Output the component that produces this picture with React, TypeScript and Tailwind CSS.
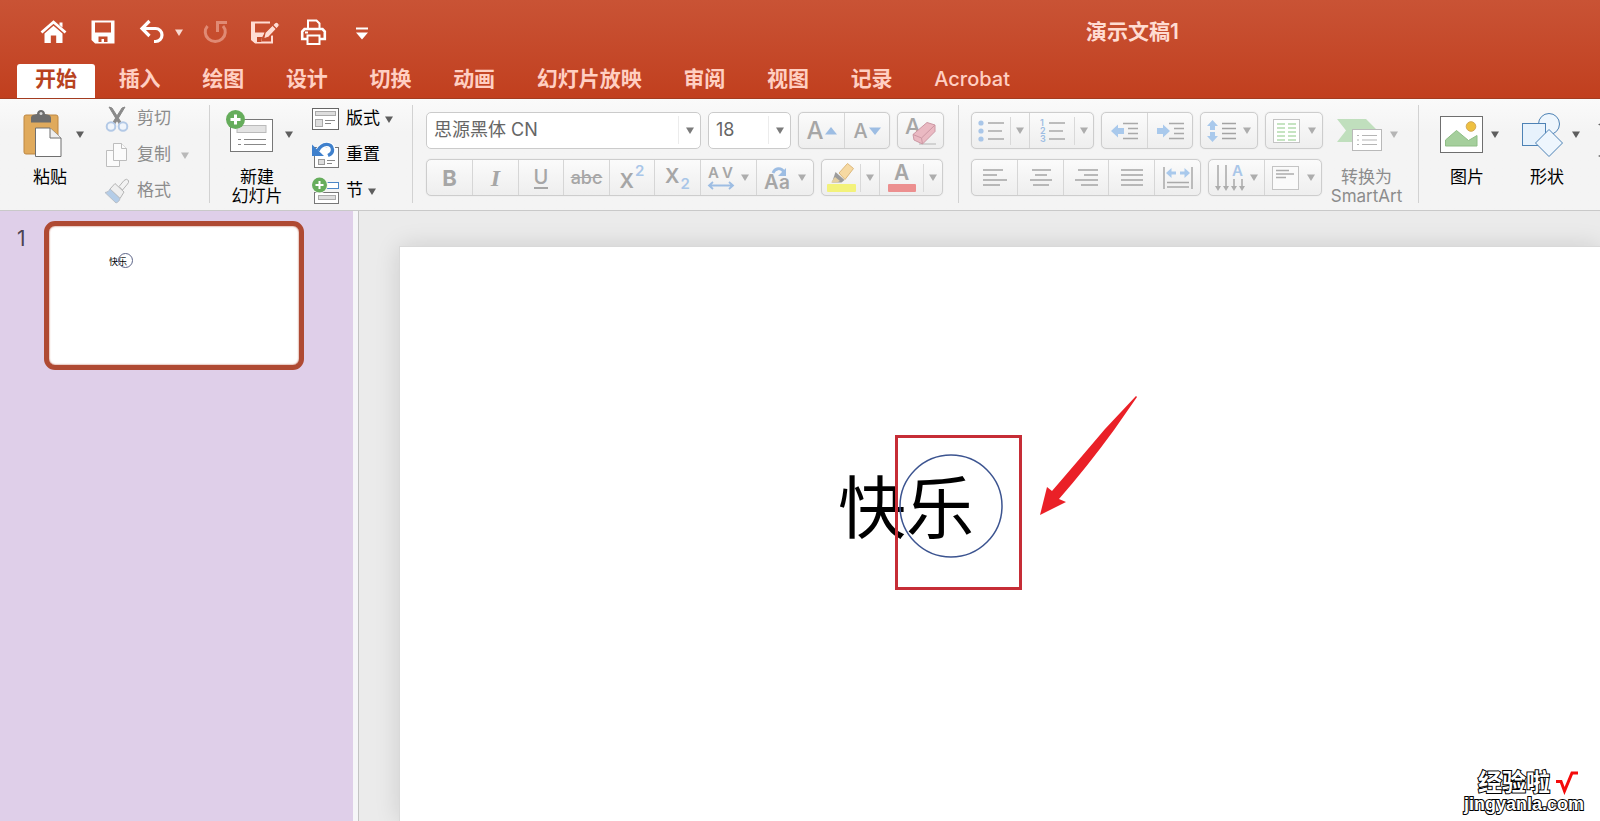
import type { ReactNode } from "react";

const tabs = ["插入", "绘图", "设计", "切换", "动画", "幻灯片放映", "审阅", "视图", "记录"];

function Caret({ className = "text-[#5e5e5e]" }: { className?: string }) {
  return (
    <svg width="8" height="7" viewBox="0 0 8 7" className={`shrink-0 ${className}`} aria-hidden="true">
      <path d="M0 0.5h8L4 7z" fill="currentColor" />
    </svg>
  );
}

function Divider() {
  return <div className="h-[98px] w-px shrink-0 bg-[#d2d2d2]" />;
}

function Box({ children }: { children: ReactNode }) {
  return (
    <div className="flex h-[37px] shrink-0 divide-x divide-[#d6d6d6] rounded-[5px] border border-[#cdcdcd] bg-linear-to-b from-[#fbfbfb] to-[#eeeeee] shadow-[0_0_1px_#cccccc]">
      {children}
    </div>
  );
}

function Cell({ label, width = "w-[46px]", children }: { label: string; width?: string; children: ReactNode }) {
  return (
    <button type="button" aria-label={label} className={`flex h-full shrink-0 items-center justify-center leading-7 text-[#a6a6a6] ${width}`}>
      {children}
    </button>
  );
}

function SplitCell({ label, width, children }: { label: string; width: string; children: ReactNode }) {
  return (
    <div className={`flex h-full shrink-0 items-center ${width}`}>
      <button type="button" aria-label={label} className="flex h-full flex-1 items-center justify-center">
        {children}
      </button>
      <div className="h-7 w-px bg-[#d9d9d9]" />
      <button type="button" aria-label={`${label}选项`} className="flex h-full w-[18px] items-center justify-center">
        <Caret className="text-[#adadad]" />
      </button>
    </div>
  );
}

function Lines({ rows, width = 26, height = 20 }: { rows: [number, number, number][]; width?: number; height?: number }) {
  return (
    <svg width={width} height={height} viewBox={`0 0 ${width} ${height}`} aria-hidden="true">
      {rows.map(([x1, x2, y]) => (
        <path key={y} d={`M${x1} ${y}H${x2}`} stroke="#a9a9a9" strokeWidth="1.6" />
      ))}
    </svg>
  );
}

function QuickBar() {
  return (
    <div className="flex items-center pl-10 text-white">
      <button type="button" aria-label="主页" className="mr-6 block">
        <svg width="27" height="26" viewBox="0 0 27 26" fill="none">
          <path d="M1.500 13.500 13.500 3l12 10.500" stroke="currentColor" strokeWidth="2.800" />
          <path d="M19.500 3.500h3v5l-3-2.500z" fill="currentColor" />
          <path d="M4.500 14.500 13.500 6.800l9 7.700V24h-6.300v-7.500h-5.400V24H4.500z" fill="currentColor" />
        </svg>
      </button>
      <button type="button" aria-label="保存" className="mr-6 block">
        <svg width="24" height="26" viewBox="0 0 24 26" fill="none">
          <path d="M1.500 2.500h21v21h-18l-3-3z" stroke="currentColor" strokeWidth="2" />
          <path d="M1 13.500V3h3v10.500h16V3h3v21H5l-4-4z" fill="currentColor" />
          <path d="M7.500 23v-5.500h9V23h-3.500v-3h-2.500v3z" fill="#c34b2b" />
        </svg>
      </button>
      <button type="button" aria-label="撤消" className="mr-[10px] block">
        <svg width="26" height="26" viewBox="0 0 26 26" fill="none" stroke="currentColor" strokeWidth="3.200">
          <path d="M10.500 2 3 9.500l7.500 7.500M3 9.500h13.500a6.500 6.500 0 0 1 0 13H15" />
        </svg>
      </button>
      <button type="button" aria-label="撤消列表" className="mr-5 block">
        <Caret className="text-[#f8d9d0]" />
      </button>
      <button type="button" aria-label="恢复" className="mr-[22px] block text-[#e08a74]">
        <svg width="25" height="26" viewBox="0 0 25 26" fill="none" stroke="currentColor" strokeWidth="3">
          <path d="M4.500 7a10 9.500 0 1 0 15.500 0M14.500 13V3.500H24" />
        </svg>
      </button>
      <button type="button" aria-label="另存为" className="mr-5 block text-[#ffdcd3]">
        <svg width="30" height="26" viewBox="0 0 30 26" fill="none">
          <path d="M20 3.500H2v17l3.500 3H22v-7" stroke="currentColor" strokeWidth="2" />
          <path d="M1 13.500h14l-3 5v5.500H5l-4-4zM2 3h3v11H2z" fill="currentColor" />
          <path d="M7 23v-5h5l-.5 5z" fill="#c34b2b" />
          <path d="m13.500 20 1.500-6.500L24.500 4a2.500 2.500 0 0 1 3.800 0 2.700 2.700 0 0 1 .2 4L19 18z" fill="currentColor" stroke="#c54d2d" strokeWidth="1.300" />
          <path d="m22.500 6 4 4" stroke="#c54d2d" strokeWidth="1.300" />
        </svg>
      </button>
      <button type="button" aria-label="打印" className="mr-[29px] block">
        <svg width="27" height="26" viewBox="0 0 27 26" fill="none" stroke="currentColor" strokeWidth="2">
          <path d="M8 10V1.500h8.500l3 3V10" />
          <path d="M7 20H2.200v-7.500L4.500 10h18l2.300 2.500V20H20" strokeWidth="2.600" />
          <path d="M7.500 16.500h12V25h-12z" />
          <path d="M5 13.500h3" />
        </svg>
      </button>
      <button type="button" aria-label="自定义快速访问工具栏" className="block">
        <svg width="12" height="26" viewBox="0 0 12 26" fill="currentColor">
          <path d="M0 8.500h12v2H0zM0 13.500h12l-6 7z" />
        </svg>
      </button>
    </div>
  );
}

function Header() {
  return (
    <header className="flex flex-col border-b border-[#a33c20] bg-linear-to-b from-[#c95335] to-[#c13f1e]">
      <div className="flex h-16 items-center">
        <QuickBar />
        <h1 className="ml-[718px] shrink-0 text-[21px] leading-6 font-semibold text-[#ffdcd2]">演示文稿1</h1>
      </div>
      <nav className="ml-[17px] flex w-[1011px] justify-between text-[21px] leading-[30px]">
        <a href="#" className="h-[34px] shrink-0 rounded-t-[3px] bg-white px-[18px] font-semibold text-[#b8431f]">
          开始
        </a>
        {tabs.map((tab) => (
          <a key={tab} href="#" className="h-[34px] shrink-0 px-[18px] font-semibold text-[#ffcfc2]">
            {tab}
          </a>
        ))}
        <a href="#" className="h-[34px] shrink-0 px-[18px] text-[20px] font-medium text-[#ffcfc2]">
          Acrobat
        </a>
      </nav>
    </header>
  );
}

function PasteGroup() {
  return (
    <div className="flex w-[209px] shrink-0">
      <div className="flex w-[97px] flex-col pt-1">
        <div className="flex items-center pl-[23px]">
          <button type="button" aria-label="粘贴图标">
            <svg width="40" height="50" viewBox="0 0 40 50">
              <rect x="1" y="6" width="34" height="39" rx="2" fill="#e0aa5c" stroke="#bd8742" />
              <path d="M8 13.500V9c0-3 3-3.500 6-4 0-5.500 8-5.500 8 0 3 .500 6 1 6 4v4.500z" fill="#6d6d6d" />
              <circle cx="18" cy="4.500" r="1.500" fill="#d8d8d8" />
              <path d="M12.500 19h14.500l11 10v18.500H12.500z" fill="#fff" stroke="#6f6f6f" />
              <path d="M27 19v10h11" fill="#eee" stroke="#6f6f6f" />
            </svg>
          </button>
          <button type="button" aria-label="粘贴选项" className="ml-[13px]">
            <Caret />
          </button>
        </div>
        <span className="mt-[9px] pl-[33px] text-[17px] leading-[19px] text-black">粘贴</span>
      </div>
      <div className="-mt-1 flex flex-col pl-2 text-[17px] text-[#8c8c8c]">
        <button type="button" className="flex h-9 items-center gap-2">
          <svg width="24" height="26" viewBox="0 0 24 26" fill="none">
            <path d="M4 1 7 2l9.500 15-2 1.500z" fill="#8a8a8a" stroke="#8a8a8a" />
            <path d="m20 1-3 1-9.500 15 2 1.500z" fill="#8a8a8a" stroke="#8a8a8a" />
            <circle cx="6" cy="20.500" r="4.300" fill="#f0f5fb" stroke="#b3c9e6" strokeWidth="2" />
            <circle cx="18" cy="20.500" r="4.300" fill="#f0f5fb" stroke="#b3c9e6" strokeWidth="2" />
          </svg>
          剪切
        </button>
        <button type="button" className="flex h-9 items-center gap-2">
          <svg width="24" height="26" viewBox="0 0 24 26" fill="#fbfbfb" stroke="#bdbdbd">
            <path d="M1.500 8.500h8l5 4v12h-13z" />
            <path d="M8.500 1.500h8l5 5v12h-13z" />
            <path d="M16.500 1.500v5h5" />
          </svg>
          复制
          <Caret className="ml-[2px] text-[#b9b9b9]" />
        </button>
        <button type="button" className="flex h-9 items-center gap-2">
          <svg width="24" height="26" viewBox="0 0 24 26">
            <path d="m14 8.500 5-6q2.500-2.500 4.500 0 .500 2-1 3.500L17.500 12z" fill="#f3f3f3" stroke="#b5b5b5" />
            <path d="m10 5.500 9 8.500-4 6.500L5 11z" fill="#efefef" stroke="#b5b5b5" />
            <path d="M5 11c-1 2-2 3-5 3.500L11 25c2.500-1 3.500-2.500 4-4.500z" fill="#b4cde8" stroke="#b9bfc7" />
          </svg>
          格式
        </button>
      </div>
    </div>
  );
}

function SlidesGroup() {
  return (
    <div className="flex w-[202px] shrink-0">
      <div className="flex w-[94px] flex-col pt-1">
        <div className="flex items-center pl-4">
          <button type="button" aria-label="新建幻灯片图标">
            <svg width="48" height="50" viewBox="0 0 48 50">
              <rect x="4.500" y="10.500" width="42" height="32" fill="#fff" stroke="#777" />
              <rect x="11" y="16.500" width="29" height="7" fill="#e3e3e3" stroke="#bbb" />
              <path d="M12 30.500h3m3 0h22M12 35.500h3m3 0h22" stroke="#888" />
              <circle cx="9.500" cy="10.500" r="9.500" fill="#66ad5c" />
              <path d="M9.500 5.500v10M4.500 10.500h10" stroke="#fff" strokeWidth="3" />
            </svg>
          </button>
          <button type="button" aria-label="新建幻灯片选项" className="ml-[11px]">
            <Caret />
          </button>
        </div>
        <span className="mt-[9px] w-[94px] text-center text-[17px] leading-[19px] text-black">
          新建
          <br />
          幻灯片
        </span>
      </div>
      <div className="-mt-1 flex flex-col pl-2 text-[17px] text-black">
        <button type="button" className="flex h-9 items-center gap-[5px]">
          <svg width="27" height="26" viewBox="0 0 27 26" className="mr-[2px]">
            <rect x=".5" y="2.500" width="26" height="21" fill="#fff" stroke="#666" />
            <rect x="3.500" y="5.500" width="20" height="4" fill="#ddd" stroke="#aaa" />
            <rect x="3.500" y="13.500" width="7" height="7" fill="#ddd" stroke="#aaa" />
            <path d="M13 14.500h10M13 17.500h6" stroke="#888" />
          </svg>
          版式
          <Caret />
        </button>
        <button type="button" className="flex h-9 items-center gap-[5px]">
          <svg width="27" height="28" viewBox="0 0 27 28" className="mr-[2px]">
            <rect x="2.500" y="6.500" width="24" height="20" fill="#fff" stroke="#777" />
            <rect x="6.500" y="18.500" width="6" height="5" fill="#ddd" stroke="#999" />
            <path d="M15 19.500h8M15 22.500h5" stroke="#888" />
            <path d="M6 10.500c4-9 14-8 14.500-2 .2 4-3 5.500-5.500 6.500" fill="none" stroke="#fff" strokeWidth="6" />
            <path d="M6 9.500c4-8 14-8 14.500-1 .2 3-2 5-4.500 6" fill="none" stroke="#3f80cc" strokeWidth="3.400" />
            <path d="M0 3.500v11.500h12z" fill="#3f80cc" />
          </svg>
          重置
        </button>
        <button type="button" className="flex h-9 items-center gap-[5px]">
          <svg width="27" height="28" viewBox="0 0 27 28" className="mr-[2px]">
            <rect x="10.500" y="5.500" width="16" height="6" fill="#fff" stroke="#4b86c6" />
            <rect x="2.500" y="15.500" width="24" height="11" fill="#fff" stroke="#777" />
            <rect x="6.500" y="18.500" width="17" height="4" fill="#ddd" stroke="#aaa" />
            <circle cx="7.500" cy="8" r="8.500" fill="#f5f5f5" />
            <circle cx="7.500" cy="8" r="7.500" fill="#66ad5c" />
            <path d="M7.500 4v8M3.500 8h8" stroke="#fff" strokeWidth="2" />
          </svg>
          节
          <Caret />
        </button>
      </div>
    </div>
  );
}

function FontGroup() {
  return (
    <div className="flex w-[545px] shrink-0 flex-col gap-[10px] pt-[7px] pl-[13px]">
      <div className="flex">
        <label className="relative mr-[7px] block h-[37px] w-[275px]">
          <select aria-label="字体" className="h-full w-full appearance-none rounded-[5px] border border-[#cbcbcb] bg-white px-[7px] pb-[2px] text-[18px] leading-7 text-[#666666]">
            <option>思源黑体 CN</option>
          </select>
          <span className="pointer-events-none absolute top-1 right-0 flex h-7 w-[23px] items-center justify-center border-l border-[#ececec]">
            <Caret className="text-[#7b7b7b]" />
          </span>
        </label>
        <label className="relative mr-[7px] block h-[37px] w-[83px]">
          <select aria-label="字号" className="h-full w-full appearance-none rounded-[5px] border border-[#cbcbcb] bg-white px-[7px] pb-[2px] text-[18px] leading-7 text-[#666666]">
            <option>18</option>
          </select>
          <span className="pointer-events-none absolute top-1 right-0 flex h-7 w-[23px] items-center justify-center border-l border-[#ececec]">
            <Caret className="text-[#7b7b7b]" />
          </span>
        </label>
        <Box>
          <Cell label="增大字号">
            <span className="text-[24px] font-medium">A</span>
            <svg width="12" height="8" viewBox="0 0 12 8" className="ml-px"><path d="M0 7.500h12L6 0z" fill="#9dbde3" /></svg>
          </Cell>
          <Cell label="减小字号" width="w-[44px]">
            <span className="text-[20px] font-medium">A</span>
            <svg width="12" height="8" viewBox="0 0 12 8" className="ml-px"><path d="M0 .5h12L6 8z" fill="#9dbde3" /></svg>
          </Cell>
        </Box>
        <div className="w-[7px]" />
        <Box>
          <Cell label="清除格式" width="w-[45px]">
            <svg width="36" height="32" viewBox="0 0 36 32" className="overflow-visible">
              <path d="M16 29h17" stroke="#d2d2d2" strokeWidth="2" />
              <text x="2" y="19" fontSize="22" fontWeight="500" fill="#a6a6a6">A</text>
              <path d="m10 19.500 14-12 8 2.500v6.500L19.500 29l-8.500-4z" fill="#eab9c2" stroke="#cc98a4" />
              <path d="m10 19.500 8.500 3.500L32 10M18.500 23l1 6" fill="none" stroke="#cc98a4" />
            </svg>
          </Cell>
        </Box>
      </div>
      <div className="flex gap-[7px]">
        <Box>
          <Cell label="加粗"><span className="text-[22px] font-bold">B</span></Cell>
          <Cell label="倾斜"><span className="font-['Liberation_Serif',serif] text-[24px] font-bold italic">I</span></Cell>
          <Cell label="下划线" width="w-[45px]"><span className="border-b-2 border-[#a6a6a6] text-[20px] leading-5 font-medium">U</span></Cell>
          <Cell label="删除线"><span className="text-[18px] font-medium line-through">abc</span></Cell>
          <Cell label="上标" width="w-[45px]">
            <span className="flex items-end text-[20px] leading-6 font-semibold">
              <span className="pt-[6px]">X</span>
              <span className="ml-px self-start text-[15px] leading-4 text-[#a9c6e8]">2</span>
            </span>
          </Cell>
          <Cell label="下标">
            <span className="flex items-start text-[20px] leading-6 font-semibold">
              <span>X</span>
              <span className="mt-3 ml-px text-[15px] leading-4 text-[#a9c6e8]">2</span>
            </span>
          </Cell>
          <Cell label="字符间距" width="w-[56px]">
            <svg width="26" height="28" viewBox="0 0 26 28" className="overflow-visible">
              <text x="0" y="14" fontSize="15" fontWeight="600" fill="#a6a6a6">A</text>
              <text x="14" y="14" fontSize="15" fontWeight="600" fill="#a6a6a6">V</text>
              <path d="M2 21.500h22M5 18l-4 3.500L5 25M21 18l4 3.500-4 3.500" fill="none" stroke="#9dbde3" strokeWidth="1.800" />
            </svg>
            <Caret className="ml-[7px] text-[#adadad]" />
          </Cell>
          <Cell label="更改大小写" width="w-[56px]">
            <svg width="27" height="28" viewBox="0 0 27 28" className="overflow-visible">
              <text x="0" y="25" fontSize="20" fontWeight="600" fill="#a6a6a6">A</text>
              <text x="15" y="25" fontSize="19" fontWeight="600" fill="#a6a6a6">a</text>
              <path d="M9 9c2-5 8-6 11-1" fill="none" stroke="#9dbde3" strokeWidth="2.800" />
              <path d="M22 4v8h-8z" fill="#9dbde3" />
            </svg>
            <Caret className="ml-[7px] text-[#adadad]" />
          </Cell>
        </Box>
        <Box>
          <SplitCell label="突出显示颜色" width="w-[58px]">
            <svg width="30" height="30" viewBox="0 0 30 30">
              <rect x="1" y="21" width="29" height="8" rx="1" fill="#f3f27b" />
              <path d="m13 10 8.500-9.500 6 5-8.500 11z" fill="#f6d9a2" stroke="#dcb87c" />
              <path d="m9.500 9 9 8-3 2.500H6z" fill="#9b9b9b" />
              <path d="m9 14 5 4-3 1.500H5z" fill="#e4cfa2" />
            </svg>
          </SplitCell>
          <SplitCell label="字体颜色" width="w-[62px]">
            <svg width="30" height="30" viewBox="0 0 30 30" className="overflow-visible">
              <text x="7" y="17" fontSize="21" fontWeight="600" fill="#a6a6a6">A</text>
              <rect x="1" y="21" width="28" height="8" rx="1" fill="#ec8f8f" />
            </svg>
          </SplitCell>
        </Box>
      </div>
    </div>
  );
}

function ParagraphGroup() {
  return (
    <div className="flex shrink-0 flex-col gap-[10px] pt-[7px] pl-3">
      <div className="flex gap-[7px]">
        <Box>
          <SplitCell label="项目符号" width="w-[58px]">
            <svg width="27" height="22" viewBox="0 0 27 22">
              <g fill="#a9c6e8"><circle cx="3" cy="3" r="2.600" /><circle cx="3" cy="11" r="2.600" /><circle cx="3" cy="19" r="2.600" /></g>
              <path d="M10 3h16M10 11h14M10 19h16" stroke="#a9a9a9" strokeWidth="1.600" />
            </svg>
          </SplitCell>
          <SplitCell label="编号" width="w-[63px]">
            <svg width="27" height="26" viewBox="0 0 27 26" className="overflow-visible">
              <g fontSize="9" fontWeight="600" fill="#9dbde3"><text x="1" y="8">1</text><text x="1" y="16">2</text><text x="1" y="24">3</text></g>
              <path d="M10 5h16M10 13h14M10 21h16" stroke="#a9a9a9" strokeWidth="1.600" />
            </svg>
          </SplitCell>
        </Box>
        <Box>
          <Cell label="减少缩进量">
            <svg width="27" height="20" viewBox="0 0 27 20">
              <path d="M12 2.500h15M17 7.500h10M17 12.500h10M12 17.500h15" stroke="#a9a9a9" strokeWidth="1.600" />
              <path d="m0 10 7-6.500V7h6v6H7v3.500z" fill="#a9c9ec" />
            </svg>
          </Cell>
          <Cell label="增加缩进量" width="w-[44px]">
            <svg width="27" height="20" viewBox="0 0 27 20">
              <path d="M12 2.500h15M17 7.500h10M17 12.500h10M12 17.500h15" stroke="#a9a9a9" strokeWidth="1.600" />
              <path d="M13 10 6 3.500V7H0v6h6v3.500z" fill="#a9c9ec" />
            </svg>
          </Cell>
        </Box>
        <Box>
          <Cell label="行距" width="w-[56px]">
            <svg width="30" height="24" viewBox="0 0 30 24">
              <path d="m5.500 1 5.500 6H8v4H3V7H0zM5.500 23 0 17h3v-4h5v4h3z" fill="#a9c9ec" />
              <path d="M15 4.500h14M15 9.500h14M15 14.500h14M15 19.500h14" stroke="#a3a3a3" strokeWidth="1.600" />
            </svg>
            <Caret className="ml-[6px] text-[#adadad]" />
          </Cell>
        </Box>
        <Box>
          <Cell label="分栏" width="w-[56px]">
            <svg width="27" height="24" viewBox="0 0 27 24">
              <rect x=".5" y=".5" width="26" height="23" fill="#fff" stroke="#c4c4c4" />
              <path d="M4 5h8M4 9h8M4 13h8M4 17h8M4 21h8M15 5h8M15 9h8M15 13h8M15 17h8M15 21h8" stroke="#b4dbae" strokeWidth="1.600" />
            </svg>
            <Caret className="ml-2 text-[#adadad]" />
          </Cell>
        </Box>
      </div>
      <div className="flex gap-[7px]">
        <Box>
          <Cell label="左对齐"><Lines rows={[[1, 21, 2], [1, 15, 7], [1, 25, 12], [1, 18, 17]]} /></Cell>
          <Cell label="居中"><Lines rows={[[4, 23, 2], [7, 19, 7], [2, 24, 12], [5, 21, 17]]} /></Cell>
          <Cell label="右对齐" width="w-[45px]"><Lines rows={[[5, 25, 2], [11, 25, 7], [2, 25, 12], [8, 25, 17]]} /></Cell>
          <Cell label="两端对齐"><Lines rows={[[2, 24, 2], [2, 24, 7], [2, 24, 12], [2, 24, 17]]} /></Cell>
          <Cell label="分散对齐" width="w-[45px]">
            <svg width="30" height="24" viewBox="0 0 30 24">
              <path d="M1 1v22M29 1v22M4 16.500h22M4 21h22" stroke="#a9a9a9" strokeWidth="1.500" />
              <path d="m3 7 5.500-5v3.500H13v3H8.500V12zM27 7l-5.500-5v3.500H17v3h4.500V12z" fill="#a9c9ec" />
            </svg>
          </Cell>
        </Box>
        <Box>
          <Cell label="文字方向" width="w-[56px]">
            <svg width="30" height="28" viewBox="0 0 30 28" className="overflow-visible">
              <path d="M3 1v23M11 1v23M19 15v9M27 15v9" stroke="#adadad" strokeWidth="1.600" />
              <path d="M0 22h6l-3 5zM8 22h6l-3 5zM16 22h6l-3 5zM24 22h6l-3 5z" fill="#adadad" />
              <text x="17" y="12" fontSize="15" fontWeight="600" fill="#a9c6e8">A</text>
            </svg>
            <Caret className="ml-[5px] text-[#adadad]" />
          </Cell>
          <Cell label="对齐文本" width="w-[56px]">
            <svg width="27" height="24" viewBox="0 0 27 24">
              <rect x=".5" y=".5" width="26" height="23" fill="#fafafa" stroke="#c4c4c4" />
              <path d="M4 4.500h13M4 8h18M4 11.500h10" stroke="#adadad" strokeWidth="1.500" />
            </svg>
            <Caret className="ml-2 text-[#adadad]" />
          </Cell>
        </Box>
      </div>
    </div>
  );
}

function SmartArt() {
  return (
    <div className="flex w-[95px] shrink-0 flex-col pt-1">
      <div className="flex items-center pl-[14px]">
        <button type="button" aria-label="转换为 SmartArt 图标">
          <svg width="46" height="50" viewBox="0 0 46 50">
            <path d="M0 10h29l12 12-11 11H0l9-11.500z" fill="#c0dfbd" />
            <rect x="15.500" y="20.500" width="29" height="21" fill="#fff" stroke="#b9b9b9" />
            <path d="M20 26.500h2m3 0h15M20 31h2m3 0h15M20 35.500h2m3 0h15" stroke="#b5b5b5" />
          </svg>
        </button>
        <button type="button" aria-label="SmartArt 选项" className="ml-[7px]">
          <Caret className="text-[#b5b5b5]" />
        </button>
      </div>
      <span className="mt-[9px] w-[87px] text-center text-[17px] leading-[19px] text-[#8c8c8c]">
        转换为
        <br />
        SmartArt
      </span>
    </div>
  );
}

function InsertGroup() {
  return (
    <div className="flex shrink-0">
      <div className="flex w-[95px] flex-col pt-1">
        <div className="flex items-center pl-[21px]">
          <button type="button" aria-label="图片图标">
            <svg width="43" height="50" viewBox="0 0 43 50">
              <rect x=".5" y="7.500" width="42" height="36" fill="#fff" stroke="#6f6f6f" />
              <path d="M5.500 37V31L16.500 21.500l12 10 8.500-5V37z" fill="#a5cf9c" stroke="#8fbd86" />
              <circle cx="31" cy="17.500" r="4.800" fill="#eec040" stroke="#d2a95a" />
            </svg>
          </button>
          <button type="button" aria-label="图片选项" className="ml-2">
            <Caret />
          </button>
        </div>
        <span className="mt-[9px] pl-[31px] text-[17px] leading-[19px] text-black">图片</span>
      </div>
      <div className="flex w-[84px] flex-col pt-1">
        <div className="flex items-center pl-2">
          <button type="button" aria-label="形状图标">
            <svg width="42" height="50" viewBox="0 0 42 50" stroke="#4d82b5" fill="#eef6fd">
              <circle cx="27" cy="15" r="10.500" />
              <rect x=".5" y="14.500" width="23" height="22" fill="#e7f2fc" />
              <path d="m27 20.500 13.500 13.500L27 47.500 13.500 34z" />
            </svg>
          </button>
          <button type="button" aria-label="形状选项" className="ml-2">
            <Caret />
          </button>
        </div>
        <span className="mt-[9px] pl-4 text-[17px] leading-[19px] text-black">形状</span>
      </div>
      <svg width="14" height="50" viewBox="0 0 14 50" className="mt-2" aria-hidden="true">
        <path d="M0 11.500 5 9v5zM0 43l5-2.500v5z" fill="#666" />
      </svg>
    </div>
  );
}

function Watermark() {
  return (
    <div className="absolute right-4 bottom-[7px] flex flex-col items-end font-bold text-white">
      <div className="flex items-center gap-[5px] pr-[5px] text-[24px] leading-[25px] [-webkit-text-stroke:2px_black] [paint-order:stroke_fill]">
        经验啦
        <svg width="24" height="24" viewBox="0 0 24 24" fill="none" aria-hidden="true">
          <path d="M1 10.500h5L9.500 20 17 2h6" stroke="#f40b0b" strokeWidth="3" />
        </svg>
      </div>
      <div className="font-['Liberation_Sans',sans-serif] text-[18px] leading-[19px] [-webkit-text-stroke:2px_black] [paint-order:stroke_fill]">jingyanla.com</div>
    </div>
  );
}

export default function App() {
  return (
    <div className="relative flex h-screen flex-col overflow-hidden bg-[#ebebeb] font-[Inter,'Noto_Sans_CJK_SC',sans-serif]">
      <Header />
      <section aria-label="功能区" className="flex h-28 shrink-0 items-start border-b border-[#c9c9c9] bg-linear-to-b from-[#fafafa] to-[#f4f4f4] to-30% pt-[6px]">
        <PasteGroup />
        <Divider />
        <SlidesGroup />
        <Divider />
        <FontGroup />
        <Divider />
        <ParagraphGroup />
        <SmartArt />
        <Divider />
        <InsertGroup />
      </section>
      <div className="flex min-h-0 flex-1">
        <aside className="flex w-[353px] shrink-0 items-start bg-[#dfcfe9] pt-[10px]">
          <span className="w-[44px] pt-[7px] pl-[17px] text-[21px] leading-[22px] text-[#4d4452]">1</span>
          <div className="relative h-[149px] w-[260px] rounded-[11px] border-[5px] border-[#af4a33] bg-white shadow-[inset_0_0_2px_#af4a33]">
            <span className="absolute top-[29px] left-[60px] text-[9px] leading-[13px] text-black">快乐</span>
            <span className="absolute top-[27px] left-[69px] size-[15px] rounded-full border border-[#5b6488]" />
          </div>
        </aside>
        <div className="w-[6px] shrink-0 border-r border-[#c4c4c4] bg-[#f6f6f8]" />
        <main className="flex min-w-0 flex-1 pt-9 pl-[41px]">
          <div className="relative flex-1 bg-white shadow-[0_0_24px_rgba(0,0,0,0.14)] outline outline-[#d9d9d9]">
            <p className="absolute top-[211px] left-[438px] text-[68px] leading-[100px] text-black">快乐</p>
            <svg width="104" height="104" viewBox="0 0 104 104" className="absolute top-[207px] left-[499px]" aria-hidden="true">
              <circle cx="52" cy="52" r="51" fill="none" stroke="#3c5490" strokeWidth="1.500" />
            </svg>
            <span className="absolute top-[188px] left-[495px] h-[155px] w-[127px] border-[3px] border-[#c62d36]" />
            <svg width="100" height="122" viewBox="0 0 100 122" className="absolute top-[147px] left-[639px]" aria-hidden="true">
              <path d="M1 121 8 93l5 4Q38 68 66 35L97 2l1 1L75 36Q48 73 20 105l7 3z" fill="#ea2027" />
            </svg>
          </div>
        </main>
      </div>
      <Watermark />
    </div>
  );
}
